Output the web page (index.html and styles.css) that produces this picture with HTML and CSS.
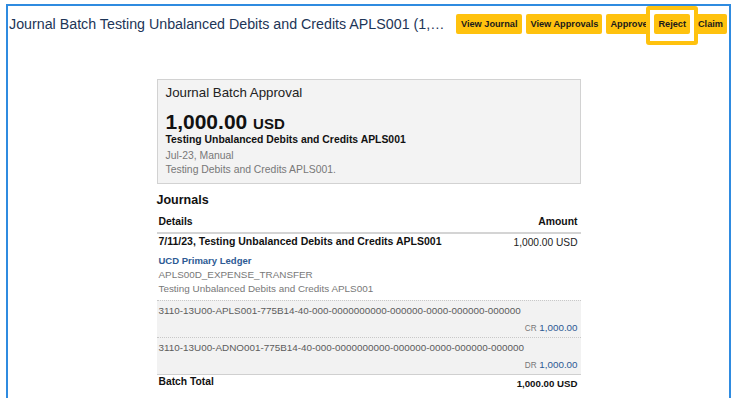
FILE: index.html
```html
<!DOCTYPE html>
<html>
<head>
<meta charset="utf-8">
<link rel="stylesheet" href="styles.css">
</head>
<body>
<div class="frame">
  <div class="topbar">
    <h1 class="title">Journal Batch Testing Unbalanced Debits and Credits APLS001 (1,…</h1>
    <div class="actions">
      <span class="btn btn-wide">View Journal</span>
      <span class="btn">View Approvals</span>
      <span class="btn btn-clip">Approve</span>
      <span class="focus"><span class="btn">Reject</span></span>
      <span class="btn">Claim</span>
    </div>
  </div>

  <div class="content">
    <div class="card">
      <div class="card-title">Journal Batch Approval</div>
      <div class="card-amount">1,000.00 <span class="cur">USD</span></div>
      <div class="card-sub">Testing Unbalanced Debits and Credits APLS001</div>
      <div class="muted big first">Jul-23, Manual</div>
      <div class="muted big">Testing Debits and Credits APLS001.</div>
    </div>

    <h2 class="section">Journals</h2>
    <div class="thead">
      <span>Details</span>
      <span>Amount</span>
    </div>
    <div class="jrow">
      <span class="jname">7/11/23, Testing Unbalanced Debits and Credits APLS001</span>
      <span class="jamt">1,000.00 USD</span>
    </div>
    <div class="jinfo">
      <div class="ledger">UCD Primary Ledger</div>
      <div class="muted">APLS00D_EXPENSE_TRANSFER</div>
      <div class="muted">Testing Unbalanced Debits and Credits APLS001</div>
    </div>
    <div class="lines">
      <div class="line">
        <div class="acct">3110-13U00-APLS001-775B14-40-000-0000000000-000000-0000-000000-000000</div>
        <div class="lamt"><span class="crdr">CR</span> <span class="val">1,000.00</span></div>
      </div>
      <div class="line">
        <div class="acct">3110-13U00-ADNO001-775B14-40-000-0000000000-000000-0000-000000-000000</div>
        <div class="lamt"><span class="crdr">DR</span> <span class="val">1,000.00</span></div>
      </div>
    </div>
    <div class="total">
      <span>Batch Total</span>
      <span class="tamt">1,000.00 USD</span>
    </div>
  </div>
</div>
</body>
</html>
```

FILE: styles.css
```css
* { box-sizing: border-box; }
html, body { margin: 0; padding: 0; background: #fff; overflow: hidden; }
body {
  font-family: "Liberation Sans", Arial, sans-serif;
  color: #222;
  width: 734px;
  height: 398px;
}
.frame {
  margin: 4px 0 0 6px;
  width: 725px;
  height: 394px;
  border: 2px solid #2f8be0;
  border-bottom: none;
}
.topbar {
  display: flex;
  align-items: center;
  justify-content: space-between;
  padding: 8px 2px 0 1px;
  height: 28px;
}
.title {
  margin: 0;
  font-size: 14.25px;
  font-weight: normal;
  color: #1d3557;
  white-space: nowrap;
  line-height: 20px;
  min-width: 0;
  overflow: hidden;
}
.actions {
  display: flex;
  flex-shrink: 0;
  gap: 4px;
  align-items: center;
}
.btn {
  display: inline-flex;
  align-items: center;
  height: 20px;
  padding: 0 4px;
  background: #ffc20e;
  border-radius: 2px;
  font-size: 9.2px;
  font-weight: bold;
  color: #1b1b1b;
  white-space: nowrap;
}
.btn-wide { padding: 0 5px; }
.btn-clip {
  width: 44px;
  overflow: hidden;
}
.focus {
  position: relative;
  z-index: 1;
  display: inline-flex;
}
.focus::before {
  content: "";
  position: absolute;
  left: -8px;
  right: -8px;
  top: -8px;
  bottom: -11px;
  border: 4px solid #ffc20e;
  border-radius: 3px;
  background: #fff;
  z-index: -1;
}

.content {
  width: 424px;
  margin: 45px auto 0;
  font-size: 10px;
}
.card {
  background: #f3f3f3;
  border: 1px solid #d2d2d2;
  padding: 4px 8px 6px;
}
.card-title { font-size: 13.3px; line-height: 18px; color: #222; }
.card-amount {
  margin-top: 9px;
  font-size: 21px;
  line-height: 21px;
  font-weight: bold;
  color: #111;
}
.card-amount .cur { font-size: 15px; }
.card-sub { font-size: 10.4px; font-weight: bold; line-height: 12px; color: #111; }
.muted { color: #787878; line-height: 14px; font-size: 9.9px; }
.muted.big { font-size: 10.4px; }
.muted.first { margin-top: 3px; }

.section {
  margin: 7px 0 0;
  font-size: 12.5px;
  line-height: 18px;
  font-weight: bold;
  color: #111;
}
.thead {
  display: flex;
  justify-content: space-between;
  padding: 6px 3px 3px 2px;
  line-height: 14px;
  font-size: 10.4px;
  font-weight: bold;
  color: #111;
  border-bottom: 2px solid #d4d4d4;
}
.jrow {
  display: flex;
  justify-content: space-between;
  padding: 0 3px 0 2px;
  line-height: 14px;
}
.jname { font-weight: bold; color: #111; font-size: 10.5px; }
.jamt { padding-top: 2px; color: #222; font-size: 10.2px; }
.jinfo {
  padding: 4px 2px 4px;
}
.ledger { font-weight: bold; color: #2d5a94; line-height: 14px; font-size: 9.5px; }
.lines {
  background: #f2f2f2;
  border-top: 1px dotted #c8c8c8;
  border-bottom: 1px solid #d0d0d0;
}
.line {
  padding: 3px 3px 1px 2px;
  line-height: 14px;
}
.line + .line { border-top: 1px dotted #c8c8c8; }
.acct { color: #5c5c5c; font-size: 9.9px; }
.lamt { text-align: right; margin-top: 3px; }
.crdr { color: #777; font-size: 8.2px; }
.val { color: #2d5a94; font-size: 9.8px; }
.total {
  display: flex;
  justify-content: space-between;
  padding: 0 3px 0 2px;
  line-height: 14px;
  font-size: 10.3px;
  font-weight: bold;
  color: #111;
}
.tamt { padding-top: 2px; font-size: 9.7px; }
```
